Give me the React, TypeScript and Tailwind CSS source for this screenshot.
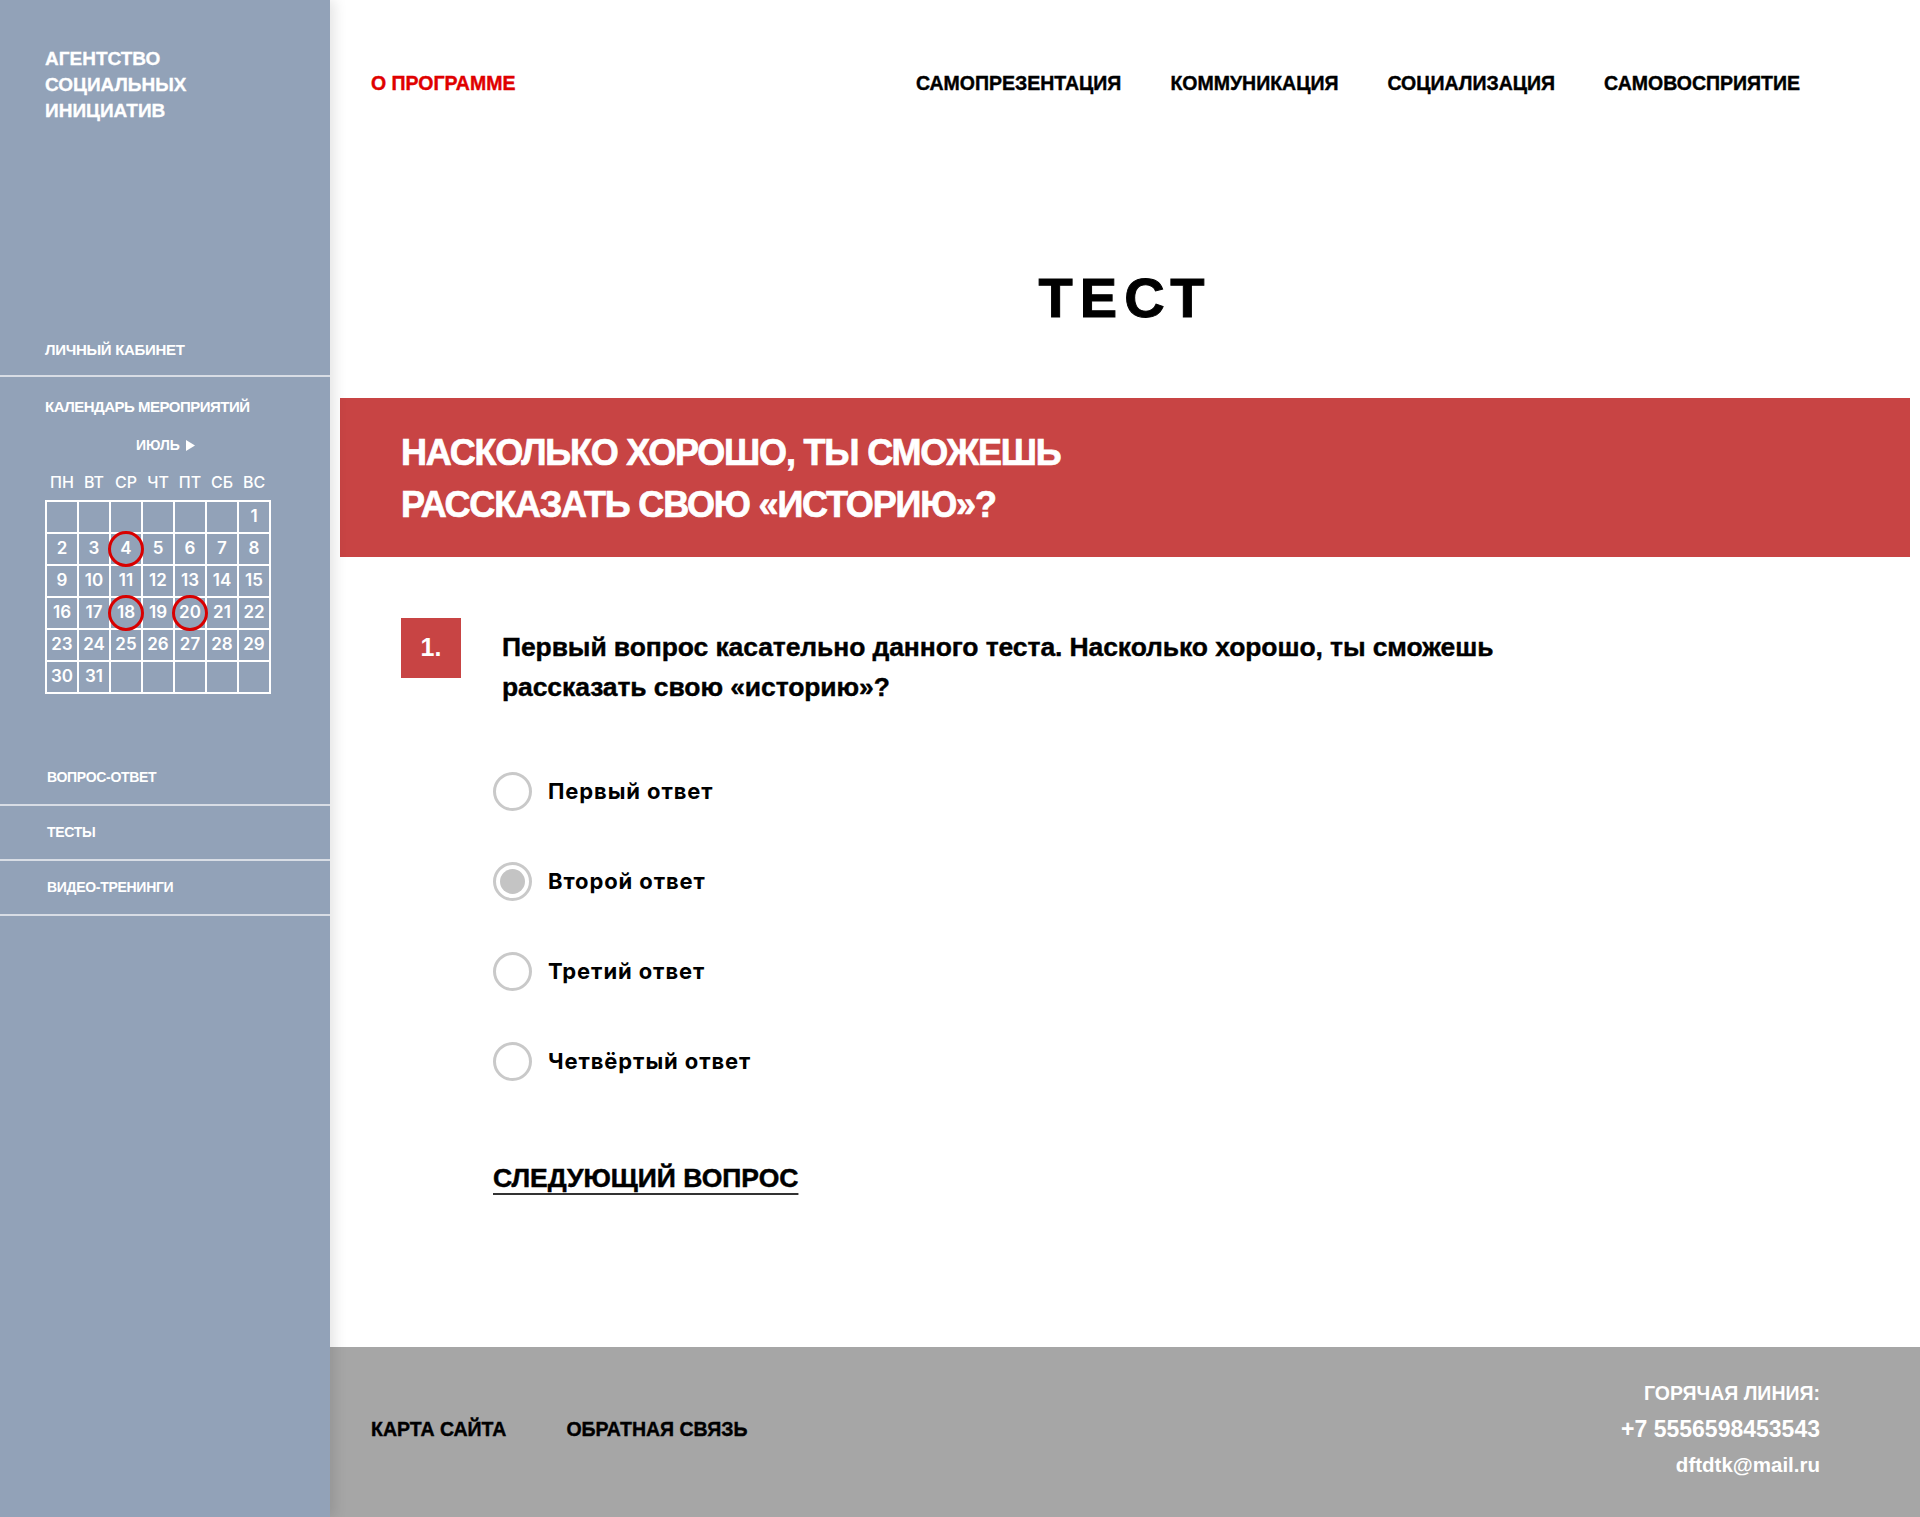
import React from "react";

const sideNav = ["ВОПРОС-ОТВЕТ", "ТЕСТЫ", "ВИДЕО-ТРЕНИНГИ"];
const topNav = ["САМОПРЕЗЕНТАЦИЯ", "КОММУНИКАЦИЯ", "СОЦИАЛИЗАЦИЯ", "САМОВОСПРИЯТИЕ"];
const weekDays = ["ПН", "ВТ", "СР", "ЧТ", "ПТ", "СБ", "ВС"];
const answers = ["Первый ответ", "Второй ответ", "Третий ответ", "Четвёртый ответ"];
const marked = [4, 18, 20];

// July: starts on sunday, 6 rows of 7
const cells: (number | null)[] = [
  ...Array(6).fill(null),
  ...Array.from({ length: 31 }, (_, i) => i + 1),
  ...Array(5).fill(null),
];

const Calendar: React.FC = () => (
  <div className="pl-[45px] pt-[20px] text-white">
    <div className="text-[15px] leading-[20px] font-bold tracking-[-0.5px]">КАЛЕНДАРЬ МЕРОПРИЯТИЙ</div>
    <div className="mt-[18px] ml-[91px] flex items-center gap-[6px] text-[14px] leading-[20px] font-bold">
      ИЮЛЬ
      <svg width="9" height="11" viewBox="0 0 9 11">
        <polygon points="0,0 9,5.5 0,11" fill="white" />
      </svg>
    </div>
    <div className="mt-[17px] grid w-[226px] grid-cols-7 gap-[2px] px-[2px] font-['Inter',sans-serif] text-[16px] leading-[20px] font-medium">
      {weekDays.map((d) => (
        <div key={d} className="text-center">
          {d}
        </div>
      ))}
    </div>
    <div className="mt-[8px] grid w-[226px] grid-cols-7 gap-[2px] bg-white p-[2px] font-['Inter',sans-serif] text-[17px] font-semibold">
      {cells.map((n, i) => (
        <div key={i} className="relative flex h-[30px] items-center justify-center bg-[#92a2b8]">
          {n}
          {n !== null && marked.includes(n) && (
            <span className="absolute -inset-[3px] z-10 rounded-full border-[3px] border-[#d80000]" />
          )}
        </div>
      ))}
    </div>
  </div>
);

const Sidebar: React.FC = () => (
  <aside className="relative z-10 flex w-[330px] shrink-0 flex-col bg-[#92a2b8] font-['Liberation_Sans',Arial,sans-serif] text-white shadow-[5px_0_12px_rgba(0,0,0,0.1)]">
    <div className="pl-[45px] pt-[46px] text-[19px] leading-[26px] font-bold [-webkit-text-stroke-width:0.3px]">
      АГЕНТСТВО
      <br />
      СОЦИАЛЬНЫХ
      <br />
      ИНИЦИАТИВ
    </div>
    <div className="mt-[201px] flex h-[52px] items-center border-b-2 border-[#d8dde5] pl-[45px] text-[15px] font-bold tracking-[-0.3px]">
      ЛИЧНЫЙ КАБИНЕТ
    </div>
    <Calendar />
    <div className="mt-[57px]">
      {sideNav.map((item) => (
        <div
          key={item}
          className="flex h-[55px] items-center border-b-2 border-[#d8dde5] pl-[47px] text-[14px] font-bold tracking-[-0.3px]"
        >
          {item}
        </div>
      ))}
    </div>
  </aside>
);

const Header: React.FC = () => (
  <header className="flex h-[168px] items-center justify-between pl-[41px] pr-[120px] text-[19.5px] font-bold [-webkit-text-stroke-width:0.4px]">
    <a className="text-[#e00000]">О ПРОГРАММЕ</a>
    <nav className="flex gap-[49px] text-black">
      {topNav.map((item) => (
        <a key={item}>{item}</a>
      ))}
    </nav>
  </header>
);

const Question: React.FC = () => (
  <section className="pl-[71px]">
    <div className="mt-[61px] flex items-start gap-[41px]">
      <div className="flex h-[60px] w-[60px] shrink-0 items-center justify-center bg-[#c84444] text-[25px] font-bold text-white">
        1.
      </div>
      <p className="pt-[9px] text-[26.5px] leading-[40px] font-bold tracking-[-0.1px] text-black [-webkit-text-stroke-width:0.4px]">
        Первый вопрос касательно данного теста. Насколько хорошо, ты сможешь
        <br />
        рассказать свою «историю»?
      </p>
    </div>
    <div className="ml-[92px] mt-[64px] flex flex-col gap-[50px] font-['Inter',sans-serif]">
      {answers.map((a, i) => (
        <label key={a} className="flex h-[40px] items-center gap-[16px] text-[22px] font-bold tracking-[0.9px] text-black">
          <span className="flex h-[39px] w-[39px] items-center justify-center rounded-full border-[3px] border-[#c9c9c9]">
            {i === 1 && <span className="h-[25px] w-[25px] rounded-full bg-[#c4c4c4]" />}
          </span>
          {a}
        </label>
      ))}
    </div>
    <a className="ml-[92px] mt-[82px] inline-block text-[26.5px] leading-[30px] font-bold text-black underline decoration-[#333] decoration-2 underline-offset-[6px] [-webkit-text-stroke-width:0.5px]">
      СЛЕДУЮЩИЙ ВОПРОС
    </a>
  </section>
);

const Footer: React.FC = () => (
  <footer className="mt-auto flex h-[170px] justify-between bg-[#a6a6a6] pl-[41px] pr-[100px] font-bold">
    <div className="flex gap-[60px] pt-[64px] text-[19.5px] leading-[36px] text-black [-webkit-text-stroke-width:0.4px]">
      <a>КАРТА САЙТА</a>
      <a>ОБРАТНАЯ СВЯЗЬ</a>
    </div>
    <div className="flex flex-col items-end pt-[28px] leading-[36px] text-white">
      <span className="text-[19.5px]">ГОРЯЧАЯ ЛИНИЯ:</span>
      <span className="text-[23px]">+7 5556598453543</span>
      <span className="text-[20.5px]">dftdtk@mail.ru</span>
    </div>
  </footer>
);

export default function App() {
  return (
    <div className="flex min-h-[1517px] bg-white font-['Liberation_Sans',Arial,sans-serif]">
      <Sidebar />
      <main className="flex min-w-0 flex-1 flex-col">
        <Header />
        <h1 className="mt-[102px] text-center text-[56px] leading-[56px] font-bold tracking-[7px] text-black [-webkit-text-stroke-width:1px]">
          ТЕСТ
        </h1>
        <div className="mx-[10px] mt-[72px] bg-[#c84444] pb-[26px] pl-[61px] pt-[29px] text-[36px] leading-[52px] font-bold tracking-[-1.2px] text-white [-webkit-text-stroke-width:0.7px]">
          НАСКОЛЬКО ХОРОШО, ТЫ СМОЖЕШЬ
          <br />
          РАССКАЗАТЬ СВОЮ «ИСТОРИЮ»?
        </div>
        <Question />
        <Footer />
      </main>
    </div>
  );
}
